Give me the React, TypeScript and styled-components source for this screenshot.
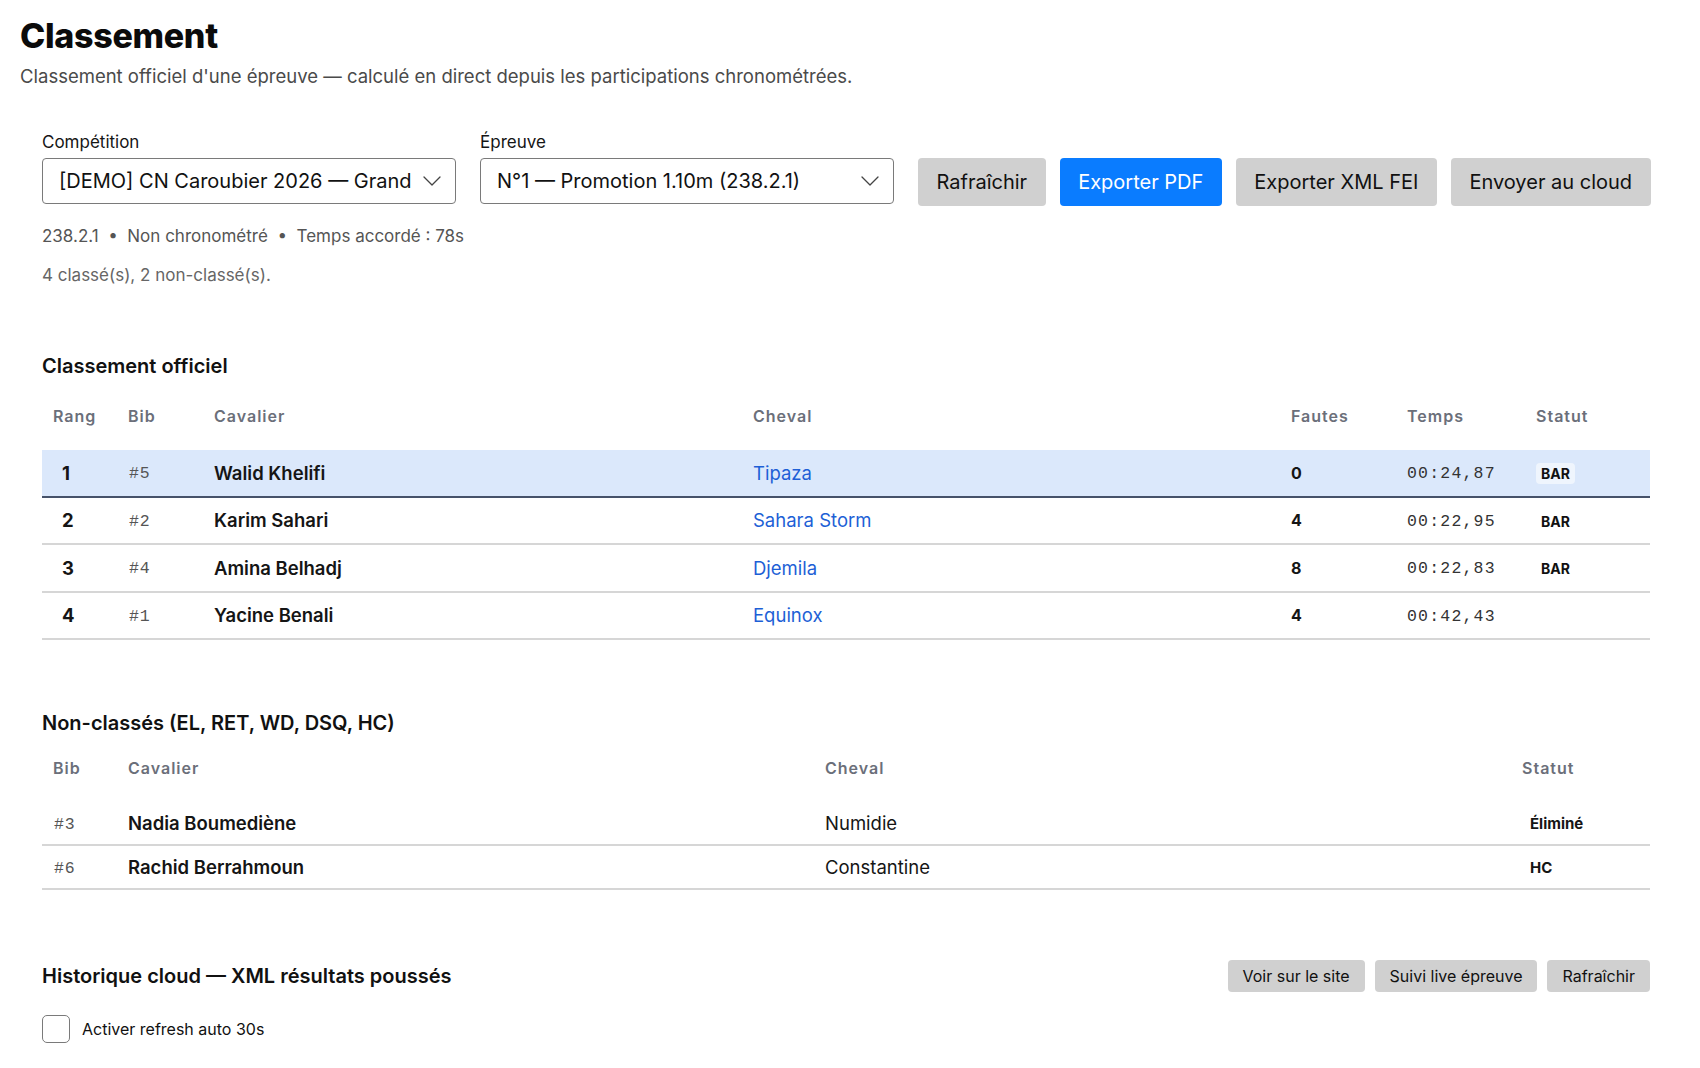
import styled, { createGlobalStyle } from 'styled-components';

type Ranked = {
  rank: number;
  bib: number;
  rider: string;
  horse: string;
  faults: number;
  time: string;
  status?: string;
  leader?: boolean;
};

type Unranked = {
  bib: number;
  rider: string;
  horse: string;
  status: string;
};

const ranked: Ranked[] = [
  { rank: 1, bib: 5, rider: 'Walid Khelifi', horse: 'Tipaza', faults: 0, time: '00:24,87', status: 'BAR', leader: true },
  { rank: 2, bib: 2, rider: 'Karim Sahari', horse: 'Sahara Storm', faults: 4, time: '00:22,95', status: 'BAR' },
  { rank: 3, bib: 4, rider: 'Amina Belhadj', horse: 'Djemila', faults: 8, time: '00:22,83', status: 'BAR' },
  { rank: 4, bib: 1, rider: 'Yacine Benali', horse: 'Equinox', faults: 4, time: '00:42,43' },
];

const unranked: Unranked[] = [
  { bib: 3, rider: 'Nadia Boumediène', horse: 'Numidie', status: 'Éliminé' },
  { bib: 6, rider: 'Rachid Berrahmoun', horse: 'Constantine', status: 'HC' },
];

const RANKED_COLS = '75px 86px 539px 538px 116px 129px 1fr';
const UNRANKED_COLS = '75px 697px 697px 1fr';

const Chevron = () => (
  <svg width="18" height="10" viewBox="0 0 18 10" fill="none">
    <path d="M1 1l8 8 8-8" stroke="#444" strokeWidth="1.3" strokeLinecap="round" strokeLinejoin="round" />
  </svg>
);

const App = () => {
  return (
    <>
      <GlobalStyle />
      <Page>
        <Header>
          <PageTitle>Classement</PageTitle>
          <Subtitle>
            Classement officiel d'une épreuve — calculé en direct depuis les participations chronométrées.
          </Subtitle>
        </Header>

        <Content>
          <Toolbar>
            <Field>
              <FieldLabel>Compétition</FieldLabel>
              <Select>
                <SelectText>[DEMO] CN Caroubier 2026 — Grand</SelectText>
                <Chevron />
              </Select>
            </Field>
            <Field>
              <FieldLabel>Épreuve</FieldLabel>
              <Select>
                <SelectText>N°1 — Promotion 1.10m (238.2.1)</SelectText>
                <Chevron />
              </Select>
            </Field>
            <Actions>
              <Button>Rafraîchir</Button>
              <Button $primary>Exporter PDF</Button>
              <Button>Exporter XML FEI</Button>
              <Button>Envoyer au cloud</Button>
            </Actions>
          </Toolbar>

          <Meta>238.2.1&nbsp; •&nbsp; Non chronométré&nbsp; •&nbsp; Temps accordé : 78s</Meta>
          <Count>4 classé(s), 2 non-classé(s).</Count>

          <SectionTitle $top={67}>Classement officiel</SectionTitle>
          <Table $top={14}>
            <HeadRow $cols={RANKED_COLS}>
              <HeadCell>Rang</HeadCell>
              <HeadCell>Bib</HeadCell>
              <HeadCell>Cavalier</HeadCell>
              <HeadCell>Cheval</HeadCell>
              <HeadCell>Fautes</HeadCell>
              <HeadCell>Temps</HeadCell>
              <HeadCell>Statut</HeadCell>
            </HeadRow>
            {ranked.map((r) => (
              <Row key={r.bib} $cols={RANKED_COLS} $leader={r.leader}>
                <RankCell>{r.rank}</RankCell>
                <BibCell>#{r.bib}</BibCell>
                <RiderCell>{r.rider}</RiderCell>
                <Cell>
                  <HorseLink href="#">{r.horse}</HorseLink>
                </Cell>
                <FaultsCell>{r.faults}</FaultsCell>
                <TimeCell>{r.time}</TimeCell>
                <Cell>{r.status && <Badge>{r.status}</Badge>}</Cell>
              </Row>
            ))}
          </Table>

          <SectionTitle $top={70}>Non-classés (EL, RET, WD, DSQ, HC)</SectionTitle>
          <Table $top={9}>
            <HeadRow $cols={UNRANKED_COLS}>
              <HeadCell>Bib</HeadCell>
              <HeadCell>Cavalier</HeadCell>
              <HeadCell>Cheval</HeadCell>
              <HeadCell>Statut</HeadCell>
            </HeadRow>
            {unranked.map((r) => (
              <Row key={r.bib} $cols={UNRANKED_COLS} $compact>
                <BibCell>#{r.bib}</BibCell>
                <RiderCell>{r.rider}</RiderCell>
                <Cell>{r.horse}</Cell>
                <StatusCell>{r.status}</StatusCell>
              </Row>
            ))}
          </Table>

          <CloudBar>
            <CloudTitle>Historique cloud — XML résultats poussés</CloudTitle>
            <SmallActions>
              <SmallButton>Voir sur le site</SmallButton>
              <SmallButton>Suivi live épreuve</SmallButton>
              <SmallButton>Rafraîchir</SmallButton>
            </SmallActions>
          </CloudBar>
          <CheckRow>
            <CheckBox type="checkbox" />
            Activer refresh auto 30s
          </CheckRow>
        </Content>
      </Page>
    </>
  );
};

const GlobalStyle = createGlobalStyle`
  * {
    box-sizing: border-box;
  }

  body {
    margin: 0;
    background: #fff;
    color: #111;
    font-family: Inter, 'Noto Sans', 'Liberation Sans', sans-serif;
  }
`;

const Page = styled.div`
  padding: 15px 20px 0;
`;

const Header = styled.header`
  display: flex;
  flex-direction: column;
  gap: 6px;
`;

const PageTitle = styled.h1`
  margin: 0;
  font-size: 34px;
  line-height: 42px;
  font-weight: 800;
  letter-spacing: -0.3px;
  color: #0b0b0b;
`;

const Subtitle = styled.p`
  margin: 0;
  font-size: 18.5px;
  line-height: 26px;
  color: #4a4a4a;
`;

const Content = styled.main`
  width: 1608px;
  margin-left: 22px;
  padding-top: 42px;
`;

const Toolbar = styled.div`
  display: flex;
  align-items: flex-end;
  gap: 24px;
`;

const Field = styled.label`
  display: flex;
  flex-direction: column;
  gap: 5px;
  flex: 0 0 414px;
  min-width: 0;
`;

const FieldLabel = styled.span`
  font-size: 17px;
  line-height: 22px;
  color: #151515;
`;

const Select = styled.div`
  display: flex;
  align-items: center;
  justify-content: space-between;
  gap: 12px;
  height: 46px;
  padding: 0 14px 0 16px;
  border: 1px solid #7a7a7a;
  border-radius: 4px;
  background: #fff;
`;

const SelectText = styled.span`
  flex: 1;
  min-width: 0;
  overflow: hidden;
  white-space: nowrap;
  font-size: 20px;
  color: #111;
`;

const Actions = styled.div`
  display: flex;
  gap: 14px;
  margin-bottom: -2px;
`;

const Button = styled.button<{ $primary?: boolean }>`
  flex-shrink: 0;
  height: 48px;
  padding: 0 18.5px;
  border: none;
  border-radius: 4px;
  white-space: nowrap;
  font-family: inherit;
  font-size: 20px;
  color: ${(p) => (p.$primary ? '#fff' : '#111')};
  background: ${(p) => (p.$primary ? '#0a7cff' : '#d0d0d0')};
  cursor: pointer;
`;

const Meta = styled.div`
  margin-top: 21px;
  font-size: 17px;
  line-height: 22px;
  color: #555;
`;

const Count = styled.div`
  margin-top: 17px;
  font-size: 17px;
  line-height: 22px;
  color: #666;
`;

const SectionTitle = styled.h2<{ $top: number }>`
  margin: ${(p) => p.$top}px 0 0;
  font-size: 20px;
  line-height: 26px;
  font-weight: 600;
  color: #111;
`;

const Table = styled.div<{ $top: number }>`
  display: flex;
  flex-direction: column;
  margin-top: ${(p) => p.$top}px;
`;

const HeadRow = styled.div<{ $cols: string }>`
  display: grid;
  grid-template-columns: ${(p) => p.$cols};
  align-items: center;
  height: 57px;
  padding-bottom: 11px;
`;

const HeadCell = styled.div`
  padding-left: 11px;
  font-size: 16px;
  font-weight: 600;
  letter-spacing: 1px;
  color: #6b6f7a;
`;

const Row = styled.div<{ $cols: string; $leader?: boolean; $compact?: boolean }>`
  display: grid;
  grid-template-columns: ${(p) => p.$cols};
  align-items: center;
  height: ${(p) => (p.$compact ? '44px' : '47.5px')};
  background: ${(p) => (p.$leader ? '#dbe8fb' : 'transparent')};
  border-bottom: 2px solid ${(p) => (p.$leader ? '#46526a' : '#d6d6d6')};
`;

const Cell = styled.div`
  padding-left: 11px;
  font-size: 18.5px;
  color: #151515;
  white-space: nowrap;
`;

const RankCell = styled(Cell)`
  padding-left: 20px;
  font-weight: 700;
`;

const BibCell = styled(Cell)`
  padding-left: 12px;
  padding-top: 2px;
  font-family: 'Liberation Mono', 'DejaVu Sans Mono', monospace;
  font-size: 16.5px;
  letter-spacing: 0.8px;
  color: #555;
`;

const RiderCell = styled(Cell)`
  font-weight: 600;
`;

const HorseLink = styled.a`
  color: #1d5fd6;
  text-decoration: none;
`;

const FaultsCell = styled(Cell)`
  font-size: 16px;
  font-weight: 700;
`;

const TimeCell = styled(Cell)`
  padding-top: 2px;
  font-family: 'Liberation Mono', 'DejaVu Sans Mono', monospace;
  font-size: 16.5px;
  letter-spacing: 1.2px;
  color: #333;
`;

const Badge = styled.span`
  display: inline-block;
  padding: 2px 5px;
  border-radius: 4px;
  background: rgba(255, 255, 255, 0.55);
  font-size: 14px;
  font-weight: 700;
  color: #111;
`;

const StatusCell = styled(Cell)`
  padding-left: 19px;
  font-size: 15px;
  font-weight: 700;
`;

const CloudBar = styled.div`
  display: flex;
  align-items: center;
  justify-content: space-between;
  margin-top: 70px;
`;

const CloudTitle = styled.h2`
  margin: 0;
  font-size: 20px;
  font-weight: 600;
  color: #111;
`;

const SmallActions = styled.div`
  display: flex;
  gap: 10px;
`;

const SmallButton = styled.button`
  height: 32px;
  padding: 0 15px;
  border: none;
  border-radius: 4px;
  font-family: inherit;
  font-size: 16px;
  color: #111;
  background: #d0d0d0;
  cursor: pointer;
`;

const CheckRow = styled.label`
  display: flex;
  align-items: center;
  gap: 12px;
  margin-top: 23px;
  font-size: 16px;
  color: #111;
`;

const CheckBox = styled.input`
  appearance: none;
  width: 28px;
  height: 28px;
  margin: 0;
  border: 1.5px solid #7a7a7a;
  border-radius: 5px;
  background: #fff;
`;

export default App;
